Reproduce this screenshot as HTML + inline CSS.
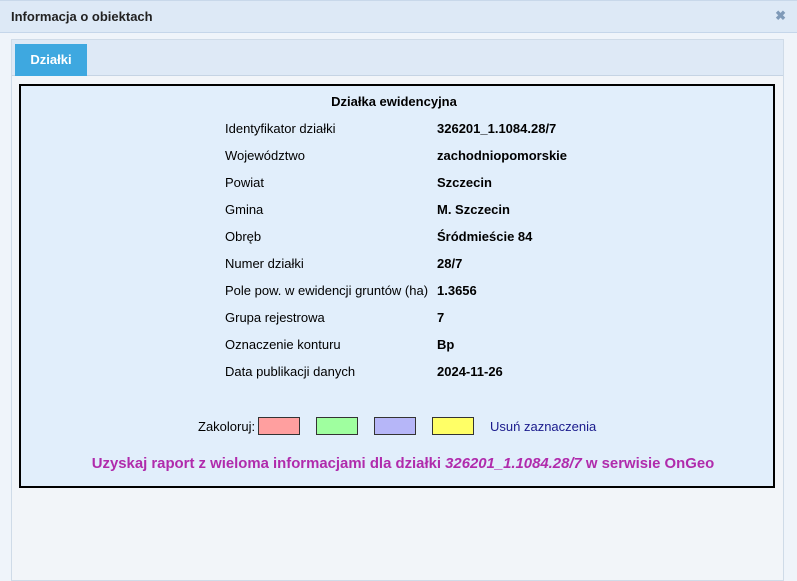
<!DOCTYPE html>
<html><head><style>
body{margin:0;width:797px;height:572px;background:#eff4fa;font-family:"Liberation Sans",Arial,sans-serif;position:relative;overflow:hidden}
.hdr{position:absolute;left:0;top:0;width:797px;height:31px;background:#dde9f6;border-bottom:1px solid #c5d6ea;border-top:1px solid #c8d8ea}
.hdr span{position:absolute;left:11px;top:8px;font-size:13px;font-weight:bold;color:#222}
.x{position:absolute;right:11px;top:7px;font-size:13px;font-weight:bold;color:#7f9ab8}
.panel{position:absolute;left:11px;top:39px;width:771px;height:540px;background:#f2f5f9;border:1px solid #cfdbe8}
.strip{position:absolute;left:0;top:0;width:771px;height:35px;background:#dee9f6;border-bottom:1px solid #c6d4e4}
.tab{position:absolute;left:3px;top:4px;width:72px;height:32px;background:#3ea8e0;color:#fff;font-weight:bold;font-size:13px;text-align:center;line-height:32px}
.frame{position:absolute;left:19px;top:84px;width:752px;height:400px;border:2px solid #000;background:#e1eefb}
.title{position:absolute;top:8px;left:-3px;width:100%;text-align:center;font-size:13px;font-weight:bold;color:#000}
.r{position:absolute;font-size:13px;color:#000;margin-top:-1px}
.l{left:204px}.v{left:416px;font-weight:bold}
.sw{position:absolute;top:331px;width:40px;height:16px;border:1px solid #333}
.link{position:absolute;top:370px;left:6px;width:100%;text-align:center;font-size:14.9px;font-weight:bold;color:#b02bac}
</style></head><body>
<div class="hdr"><span>Informacja o obiektach</span><div class="x">✖</div></div>
<div class="panel"><div class="strip"><div class="tab">Działki</div></div></div>
<div class="frame">
<div class="title">Działka ewidencyjna</div>
<div class="r l" style="top:36px">Identyfikator działki</div><div class="r v" style="top:36px">326201_1.1084.28/7</div>
<div class="r l" style="top:63px">Województwo</div><div class="r v" style="top:63px">zachodniopomorskie</div>
<div class="r l" style="top:90px">Powiat</div><div class="r v" style="top:90px">Szczecin</div>
<div class="r l" style="top:117px">Gmina</div><div class="r v" style="top:117px">M. Szczecin</div>
<div class="r l" style="top:144px">Obręb</div><div class="r v" style="top:144px">Śródmieście 84</div>
<div class="r l" style="top:171px">Numer działki</div><div class="r v" style="top:171px">28/7</div>
<div class="r l" style="top:198px">Pole pow. w ewidencji gruntów (ha)</div><div class="r v" style="top:198px">1.3656</div>
<div class="r l" style="top:225px">Grupa rejestrowa</div><div class="r v" style="top:225px">7</div>
<div class="r l" style="top:252px">Oznaczenie konturu</div><div class="r v" style="top:252px">Bp</div>
<div class="r l" style="top:279px">Data publikacji danych</div><div class="r v" style="top:279px">2024-11-26</div>
<div class="r" style="top:334px;left:177px">Zakoloruj:</div>
<div class="sw" style="left:237px;background:#ff9f9f"></div>
<div class="sw" style="left:295px;background:#9fff9f"></div>
<div class="sw" style="left:353px;background:#b6b6f8"></div>
<div class="sw" style="left:411px;background:#ffff66"></div>
<div class="r" style="top:334px;left:469px;color:#1a1a8c">Usuń zaznaczenia</div>
<div class="link">Uzyskaj raport z wieloma informacjami dla działki <i>326201_1.1084.28/7</i> w serwisie OnGeo</div>
</div>
</body></html>
